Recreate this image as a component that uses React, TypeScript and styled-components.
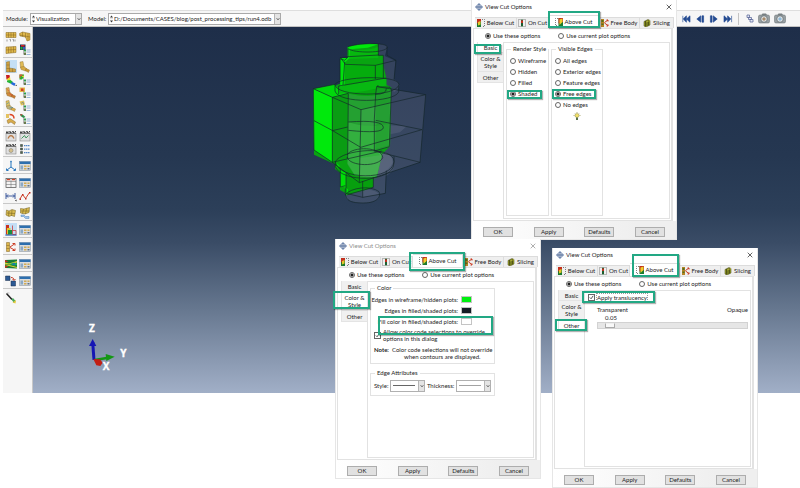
import React from "react";
import styled, { createGlobalStyle, css } from "styled-components";

const GlobalStyle = createGlobalStyle`
  * { box-sizing: border-box; }
  body { margin: 0; background: #fff; }
  body, button, input, select {
    font-family: Lato, "Liberation Sans", sans-serif;
    font-size: 6px;
    line-height: 8px;
    color: #1c1c1c;
  }
`;

const Page = styled.div`
  position: relative;
  min-height: 488px;
  overflow: hidden;
`;

/* ---------- top toolbar ---------- */

const TopBar = styled.header`
  display: flex;
  align-items: center;
  height: 17px;
  margin: 10px 0 0 3px;
  padding: 0 14px 0 3px;
  background: #f6f6f6;
  border-top: 1px solid #dedede;
  border-bottom: 1px solid #c2c2c2;
`;

const BarLabel = styled.label<{ $width: number }>`
  width: ${(p) => p.$width}px;
`;

const Combo = styled.span<{ $width: number }>`
  display: flex;
  align-items: center;
  width: ${(p) => p.$width}px;
  height: 12px;
  margin-right: 6px;
  background: #fff;
  border: 1px solid #a9a9a9;
`;

const ComboSelect = styled.select`
  flex: 1;
  min-width: 0;
  height: 10px;
  padding: 0;
  border: 0;
  appearance: none;
  background: transparent;
`;

const ChevronBox = styled.span`
  display: grid;
  place-items: center;
  width: 6px;
  align-self: stretch;
  background: #e4e4e4;
  border-left: 1px solid #b5b5b5;
`;

const Playback = styled.nav`
  display: flex;
  align-items: center;
  gap: 4px;
  margin-left: auto;
`;

const IconButton = styled.button<{ $active?: boolean }>`
  display: grid;
  place-items: center;
  padding: 0;
  border: 0;
  background: ${(p) => (p.$active ? "#c4dff5" : "transparent")};
`;

const Separator = styled.span`
  width: 1px;
  height: 12px;
  margin: 0 3px 0 1px;
  background: #c4c4c4;
`;

/* ---------- workspace ---------- */

const Workspace = styled.main`
  display: flex;
  height: 366px;
`;

const ToolColumn = styled.aside`
  width: 30px;
  margin-left: 3px;
  padding-top: 1px;
  background: #f6f6f6;
  border-right: 1px solid #c8c8c8;
`;

const ToolGroup = styled.div`
  display: grid;
  grid-template-columns: 12px 12px;
  grid-auto-rows: 13px;
  column-gap: 2px;
  padding: 2px 0 1px 2px;
  border-bottom: 1px solid #c8c8c8;
  &:last-child { border-bottom: 0; }
`;

const Viewport = styled.section`
  position: relative;
  flex: 1;
  background: linear-gradient(
    #1e2e49 0%, #253751 35%, #2c3f59 50%, #3a4c66 59%, #66778f 77%, #a1afc7 100%
  );
`;

const ModelDrawing = styled.svg`
  position: absolute;
  left: 257px;
  top: 3px;
`;

const Triad = styled.svg`
  position: absolute;
  left: 27px;
  top: 283px;
`;

/* ---------- dialogs ---------- */

const Dialog = styled.section<{ $left: number; $top: number }>`
  position: absolute;
  left: ${(p) => p.$left}px;
  top: ${(p) => p.$top}px;
  width: 206px;
  background: #fff;
  border: 1px solid #e6e6e6;
  border-top: 0;
`;

const TitleBar = styled.div<{ $muted?: boolean }>`
  display: flex;
  align-items: center;
  gap: 2px;
  height: 14px;
  padding: 0 4px 0 3px;
  color: ${(p) => (p.$muted ? "#8c8c8c" : "#222")};
`;

const CloseButton = styled.button`
  display: grid;
  place-items: center;
  margin-left: auto;
  padding: 0;
  border: 0;
  background: none;
  color: inherit;
`;

const TabStrip = styled.div`
  display: grid;
  grid-template-columns: 42px 32px 50px 41px 34px;
  align-items: end;
  height: 14px;
  padding-left: 3px;
`;

const Tab = styled.button<{ $active?: boolean }>`
  display: flex;
  align-items: center;
  justify-content: center;
  gap: 2px;
  height: ${(p) => (p.$active ? 13 : 11)}px;
  padding: 0;
  white-space: nowrap;
  background: ${(p) => (p.$active ? "#fff" : "#efefef")};
  border: 1px solid #dcdcdc;
  border-width: 1px 1px 0 0;
`;

const Frame = styled.div`
  margin: 0 3px 0 1px;
  border: 1px solid #e2e2e2;
  border-right-width: 2px;
`;

const ModeRow = styled.div`
  display: flex;
  align-items: center;
  gap: 18px;
  height: 13px;
  padding-left: 11px;
`;

const Choice = styled.label`
  display: flex;
  align-items: center;
  gap: 2px;
  height: 11px;
  white-space: nowrap;
`;

const Radio = styled.input`
  flex: none;
  width: 6px;
  height: 6px;
  margin: 0;
  appearance: none;
  border: 1px solid #666;
  border-radius: 50%;
  background: #fff;
  &:checked { background: radial-gradient(circle, #222 0 1px, #fff 2px); }
`;

const Columns = styled.div`
  display: grid;
  grid-template-columns: 26px 1fr;
  margin: 0 1px 1px 3px;
`;

const SideTab = styled.button<{ $active?: boolean; $tall?: boolean }>`
  display: block;
  width: 100%;
  height: ${(p) => (p.$tall ? 19 : 11)}px;
  padding: 0;
  line-height: 7px;
  background: ${(p) => (p.$active ? "#fff" : "#f0f0f0")};
  border: 1px solid #e4e4e4;
  border-width: 0 0 1px 1px;
`;

const Panel = styled.div`
  display: flex;
  align-items: stretch;
  gap: 2px;
  min-height: 177px;
  padding: 2px;
  border: 1px solid #e2e2e2;
`;

const PanelStack = styled.div`
  display: flex;
  flex-direction: column;
  gap: 5px;
  width: 125px;
`;

const Group = styled.fieldset<{ $width: number }>`
  width: ${(p) => p.$width}px;
  min-width: 0;
  margin: 0;
  padding: 2px 3px 3px;
  border: 1px solid #e2e2e2;
`;

const GroupTitle = styled.legend`
  margin-left: 1px;
  padding: 0 2px;
  white-space: nowrap;
`;

const Hint = styled.div`
  display: grid;
  place-items: center;
  height: 12px;
`;

const SwatchRow = styled.div`
  display: flex;
  align-items: center;
  justify-content: flex-end;
  gap: 3px;
  height: 11px;
  padding-right: 19px;
  white-space: nowrap;
`;

const Swatch = styled.button<{ $color: string }>`
  flex: none;
  width: 11px;
  height: 7px;
  padding: 0;
  background: ${(p) => p.$color};
  border: 1px solid #c4c4c4;
`;

const CheckRow = styled.label<{ $focus?: boolean }>`
  display: flex;
  align-items: center;
  gap: 2px;
  padding-top: 1px;
  line-height: 7px;
  white-space: nowrap;
  ${(p) => p.$focus && css`
    span { outline: 1px dotted #999; }
  `}
`;

const CheckBox = styled.input`
  flex: none;
  width: 7px;
  height: 7px;
  margin: 0;
  appearance: none;
  border: 1px solid #666;
  background: #fff;
  &:checked {
    background: url("data:image/svg+xml,%3Csvg xmlns='http://www.w3.org/2000/svg' viewBox='0 0 6 6'%3E%3Cpath d='M1 3l1.5 1.5L5 1' fill='none' stroke='%23333'/%3E%3C/svg%3E") center / 5px 5px no-repeat;
  }
`;

const Note = styled.div`
  display: grid;
  grid-template-columns: 18px 1fr;
  margin-top: 4px;
  line-height: 7px;
  white-space: nowrap;
`;

const NoteText = styled.div`
  text-align: center;
  justify-self: start;
`;

const AttributeRow = styled.div`
  display: flex;
  align-items: center;
  justify-content: space-between;
  height: 13px;
`;

const LinePicker = styled.span`
  display: grid;
  grid-template-columns: 1fr 6px;
  align-items: center;
  width: 35px;
  height: 12px;
  border: 1px solid #b0b0b0;
`;

const LineSelect = styled.select<{ $weight: number }>`
  width: 22px;
  height: 9px;
  margin-left: 2px;
  padding: 0;
  border: 0;
  appearance: none;
  color: transparent;
  background: linear-gradient(#666, #666) center / 100% 1px no-repeat;
  opacity: ${(p) => (p.$weight > 1 ? 1 : 0.6)};
`;

const Translucency = styled.div`
  flex: 1;
  padding: 0 0 0 1px;
`;

const Scale = styled.div`
  padding: 5px 0 0 9px;
`;

const ScaleLabels = styled.div`
  display: flex;
  justify-content: space-between;
`;

const ScaleValue = styled.output`
  display: block;
  padding-left: 8px;
`;

const Slider = styled.input`
  display: block;
  width: 100%;
  height: 7px;
  margin: 0;
  appearance: none;
  background: #e6e6e6;
  border: 1px solid #d2d2d2;
  &::-webkit-slider-thumb {
    appearance: none;
    width: 10px;
    height: 5px;
    background: #f8f8f8;
    border: 1px solid #aaa;
    border-top-color: #eee;
  }
`;

const Footer = styled.footer`
  display: flex;
  align-items: center;
  justify-content: space-between;
  height: 18px;
  padding: 3px 11px 0;
  background: linear-gradient(90deg, #fff, #efefef 80%);
`;

const PushButton = styled.button`
  width: 30px;
  height: 10px;
  padding: 0;
  line-height: 8px;
  background: #e1e1e1;
  border: 1px solid #adadad;
`;

const Highlight = styled.div<{ $x: number; $y: number; $w: number; $h: number }>`
  position: absolute;
  left: ${(p) => p.$x}px;
  top: ${(p) => p.$y}px;
  width: ${(p) => p.$w}px;
  height: ${(p) => p.$h}px;
  border: 2px solid #22a884;
  box-shadow: 1px 1px 1px rgba(0, 0, 0, 0.3);
  pointer-events: none;
`;

/* ---------- icons ---------- */

const Chevron = () => (
  <svg width="4" height="4" viewBox="0 0 4 4"><path d="M.5 1l1.5 2L3.5 1" fill="none" stroke="#555" strokeWidth=".7" /></svg>
);

const Spinner = () => (
  <svg width="5" height="10" viewBox="0 0 5 10" fill="#333">
    <path d="M2.500 1.500l1.500 2h-3zM2.500 8.500l1.500-2h-3z" /><path d="M1 4.700h3" stroke="#bbb" strokeWidth=".5" />
  </svg>
);

const AppIcon = () => (
  <svg width="8" height="8" viewBox="0 0 16 16" fill="#6f86ad">
    <path d="M8 0l4 4H4zM8 16l4-4H4zM3 4.500L0 8l3 3.500zM13 4.500L16 8l-3 3.500z" /><rect x="3" y="5" width="10" height="6" fill="#46618f" /><path d="M4 8h8" stroke="#dbe4f2" strokeWidth="1.500" />
  </svg>
);

const CloseIcon = () => (
  <svg width="6" height="6" viewBox="0 0 6 6"><path d="M.7.7l4.600 4.600M5.300.7L.7 5.300" stroke="currentColor" strokeWidth=".7" /></svg>
);

type CutKind = "below" | "on" | "above" | "free" | "slice";

const CutIcon = ({ kind }: { kind: CutKind }) => (
  <svg width="8" height="8" viewBox="0 0 16 16">
    {kind === "below" && (<g><rect width="8" height="16" fill="#1c7a2e" /><path d="M0 0h8v5L0 9z" fill="#c3301d" /><path d="M2 6l5-2v7l-5 2z" fill="#e5c62b" /><path d="M10 1h5v14h-5" fill="none" stroke="#555" strokeWidth="1.500" strokeDasharray="2 2" /></g>)}
    {kind === "on" && (<g><path d="M5 1H1v14h4M11 1h4v14h-4" fill="none" stroke="#555" strokeWidth="1.500" strokeDasharray="2 2" /><rect x="6" y="1" width="4" height="14" fill="#1c5d2e" /><path d="M6 3h4v5H6z" fill="#c3301d" /></g>)}
    {kind === "above" && (<g><path d="M6 1H1v14h5" fill="none" stroke="#555" strokeWidth="1.500" strokeDasharray="2 2" /><rect x="7" y="0" width="9" height="16" fill="#1c7a2e" /><path d="M7 0h9v8l-9 3z" fill="#c3301d" /><path d="M9 3l6-2v7l-6 6z" fill="#ecd02b" /></g>)}
    {kind === "free" && (<g><rect width="6" height="16" fill="#b58424" /><path d="M1 2h4v4H1zM1 9h4v3H1z" fill="#56701f" /><path d="M7 7l7-5M7 8l7 5M11 2h3v3M11 14h3v-3" fill="none" stroke="#c9371e" strokeWidth="2" /></g>)}
    {kind === "slice" && (<g stroke="#3c3c12"><path d="M2 5l8-4 4 2v9l-8 4-4-2z" fill="#9aa52b" /><path d="M5 4v11M8 3v11M11 2v11" fill="none" strokeWidth="1.500" /><path d="M6 6l8-3" stroke="#e6df4c" /></g>)}
  </svg>
);

const BulbIcon = () => (
  <svg width="8" height="9" viewBox="0 0 16 18">
    <circle cx="8" cy="7" r="4" fill="#f5e36a" stroke="#8c8840" /><rect x="6" y="11" width="4" height="5" fill="#587049" /><path d="M8 0v2M1 7h2M13 7h2M3 2l1 1M13 2l-1 1" stroke="#8c8840" strokeWidth="1.300" />
  </svg>
);

type ToolKind =
  | "beams" | "beamsTilt" | "plate" | "colorList" | "elbow" | "elbowTilt" | "contour" | "contourList"
  | "symbol" | "symbolList" | "orient" | "orientList" | "animate" | "animateList" | "clap" | "clap2"
  | "clap3" | "dots" | "csys" | "table" | "grid" | "ruler" | "plot" | "sheet" | "sheets" | "viewCut"
  | "freeBody" | "stream" | "overlay" | "brush";

const elbow = (
  <g stroke="#7a5a1c" strokeWidth=".8">
    <path d="M3 2l6-1v13l12 2v6H3z" fill="#cda040" /><path d="M3 8h6M3 15h6M9 14v8M15 15v7" fill="none" />
  </g>
);

const bentElbow = (upper: string, mid: string, end: string) => (
  <g strokeWidth=".8" stroke="#8a6b2e">
    <path d="M2 2l6-1 2 12H3z" fill={upper} /><path d="M3 12l7-1 6 5-3 4-9-3z" fill={mid} /><path d="M14 15l7 3-2 5-7-4z" fill={end} />
  </g>
);

const listLines = (
  <g>
    <path d="M9 7v14M9 13h3M9 20h3" stroke="#777" fill="none" /><rect x="10" y="11" width="4" height="4" fill="#2b9c49" /><rect x="10" y="17" width="4" height="5" fill="#687a4c" />
    <path d="M15 12h8M15 16h8M15 21h8" stroke="#7ba2cd" strokeWidth="1.500" />
  </g>
);

const board = (
  <g><rect x="2" y="7" width="20" height="15" fill="#e0e0e0" stroke="#777" /><path d="M2 3l20-1v5H2z" fill="#444" /><path d="M6 3l3 3M12 2l3 4M18 2l3 4" stroke="#fff" strokeWidth="2" /></g>
);

const tools: Record<ToolKind, React.ReactNode> = {
  beams: (<g><path d="M2 3h20v10H2z" fill="#dfb84b" stroke="#85651e" /><path d="M2 8h20M7 3v10M12 3v10M17 3v10" stroke="#85651e" /><path d="M4 17v4M9 17h2v4M15 17h2v4M20 17v4" stroke="#444" fill="none" /></g>),
  beamsTilt: (<g stroke="#85651e"><path d="M1 5l6-3 15 3v13l-6 2-3-8-11-2z" fill="#dfb84b" /><path d="M1 8l21 4M7 2v9M13 4v9M18 5v14" fill="none" /></g>),
  plate: (<g stroke="#85651e"><path d="M2 6l20-1v12l-20 2z" fill="#dfb84b" /><path d="M2 12l20-1M7 6v12M12 6v12M17 5v12" fill="none" /></g>),
  colorList: (<g><path d="M2 1h11v11H2z" fill="#25324e" /><path d="M4 2h7v3H4z" fill="#d22" /><path d="M3 6h4v5H3z" fill="#1cb243" /><path d="M8 6h4v5H8z" fill="#2855cf" />{listLines}</g>),
  elbow,
  elbowTilt: bentElbow("#e0bb55", "#d7ab45", "#c79530"),
  contour: (<g><path d="M2 2l7 0 1 5-7 4z" fill="#c81e1e" /><path d="M3 11l7-5 1 6-2 4z" fill="#f0db2e" /><path d="M4 13l7-1 5 4-3 4-9-4z" fill="#22b53a" /><path d="M14 16l7 3-2 5-7-4z" fill="#2468dc" /><path d="M22 21l2 3h-3z" fill="#222" /></g>),
  contourList: (<g><path d="M1 1h9v5l-4 5H1z" fill="#26b02f" /><path d="M1 1h6v3H3v4H1z" fill="#d53" /><path d="M5 5l5-2v4z" fill="#e9e02f" />{listLines}</g>),
  symbol: (<g>{bentElbow("#d9a950", "#d08b3d", "#c9772f")}<path d="M5 5l3 4M9 13l6 4" stroke="#d22" /></g>),
  symbolList: (<g><path d="M1 1h11v9H1z" fill="#e5ba49" /><path d="M4 3h5v5H4z" fill="#d33a20" />{listLines}</g>),
  orient: (<g>{bentElbow("#e0c35f", "#bdb37b", "#dcae45")}<path d="M3 8l5-3M9 16l7-1" stroke="#2480b8" /></g>),
  orientList: (<g><path d="M1 3l9-2 2 8-8 2z" fill="#e2c458" /><path d="M4 7l4-3 1 4" stroke="#44719d" fill="none" />{listLines}</g>),
  animate: (<g><path d="M2 2h6v8H2z" fill="#e3c260" /><path d="M9 3c9 0 9 5 9 8" fill="none" stroke="#d42" strokeWidth="3" /><path d="M4 15l6-4 11 7-2 5-7-5-6 3z" fill="#d8ac4b" stroke="#8a6b2e" /></g>),
  animateList: (<g><path d="M2 2l5 1 6 5-4 2-6-4z" fill="#25924a" /><path d="M2 2l5 1-2 3z" fill="#c33" />{listLines}</g>),
  clap: (<g>{board}<path d="M6 17c3-8 9-8 12 0" fill="none" stroke="#b77846" strokeWidth="2.500" /></g>),
  clap2: (<g>{board}<path d="M5 17l6-6 3 5 5-5" fill="none" stroke="#43995f" strokeWidth="2" /></g>),
  clap3: (<g>{board}<circle cx="12" cy="15" r="4" fill="#d5c08c" stroke="#777" /></g>),
  dots: (<g><path d="M3 3h4v4H3zM3 10h4v4H3zM3 17h4v4H3z" fill="#4d6d50" stroke="#333" /><path d="M10 5h12M10 12h12M10 19h12" stroke="#5487c6" strokeWidth="2.500" strokeDasharray="3 1" /></g>),
  csys: (<g stroke="#2776bd" strokeWidth="2" fill="none"><path d="M12 14V4M12 14l-8 6M12 14l8 6" /><circle cx="12" cy="3" r="1" /><path d="M3 17v4h4M21 17v4h-4" /></g>),
  table: (<g><rect x="1" y="3" width="22" height="18" fill="#d9dbdd" stroke="#7b8793" /><path d="M1 3h22v5H1z" fill="#2d6fae" /><path d="M3 11h5v8H3z" fill="#8aa9c5" /><path d="M10 11h5v3h-5zM17 11h4v3h-4zM10 16h5v3h-5z" fill="#d2ab55" /><path d="M17 16h4v3h-4z" fill="#5d6f86" /></g>),
  grid: (<g><rect x="2" y="3" width="20" height="18" fill="#f4f4f4" stroke="#555" strokeWidth="1.500" /><path d="M2 9h20M2 15h20M12 3v18" stroke="#666" /><path d="M4 5h6M14 5h6" stroke="#d0442a" strokeWidth="2.500" /></g>),
  ruler: (<g stroke="#2b4b94" strokeWidth="1.800" fill="none"><path d="M2 6v12M20 6v12M3 12h16M6 9l-3 3 3 3M16 9l3 3-3 3" /><path d="M20 21l3 2v-4z" fill="#222" stroke="none" /></g>),
  plot: (<g><path d="M2 18l5-9 6 8 8-12" fill="none" stroke="#d1432c" strokeWidth="2" /><path d="M1 17h3v3H1zM6 8h3v3H6zM12 16h3v3h-3zM20 4h3v3h-3z" fill="#c02a1d" /></g>),
  sheet: (<g><path d="M3 6l5 2 6-3 7 2-2 12-6-2-5 2-6-3z" fill="#d9ba4e" stroke="#6d5c1e" /><path d="M4 12l16 1M8 8l-1 10M14 6l-1 12" stroke="#6d5c1e" /></g>),
  sheets: (<g><path d="M3 3l7 1 11-3-1 10-8 3-9-2z" fill="#d9ba4e" stroke="#6d5c1e" /><path d="M9 4l-2 9M15 3l-2 11M4 8h17" stroke="#6d5c1e" /><path d="M4 16h6l3 3h7v4h-7l-4-4H4z" fill="#9dc3ed" stroke="#4c80b8" /></g>),
  viewCut: (<g><path d="M2 2h6v19H2z" fill="#c8321f" /><path d="M4 8h7v13H4z" fill="#e3c52c" /><path d="M6 12h8v9H6z" fill="#1c8b3d" /><path d="M15 3v18M15 13h7v8h-7" fill="none" stroke="#c33" strokeWidth="1.500" /><path d="M1 22h22" stroke="#2455a8" strokeWidth="2" /></g>),
  freeBody: (<g><path d="M3 3h6v18H3z" fill="#dcb64d" stroke="#806322" /><path d="M3 9h6M3 15h6" stroke="#806322" /><path d="M10 12l9-6M10 13l9 5M15 5h5v4M15 19h5v-4" fill="none" stroke="#cc3c24" strokeWidth="2" /></g>),
  stream: (<g><path d="M0 4l24-1v18L0 20z" fill="#1a7c35" /><path d="M0 4l7 3-7 2zM0 20l7-3-7-2z" fill="#c9341f" /><path d="M0 9l8 2 16-5v3L9 13H0zM0 14l9 0 15 4v2L8 16z" fill="#d9cf35" /><path d="M9 12l9-3 6 2v3l-6 1z" fill="#19b45c" /><path d="M13 12l6-2 2 2-3 2z" fill="#2167c0" /></g>),
  overlay: (<g><path d="M1 2h9v9H1z" fill="#2c5a94" stroke="#1b2e4b" /><path d="M12 12h9v10h-9z" fill="#2c5a94" stroke="#1b2e4b" /><path d="M12 5c4 0 6 2 6 5M15 8l3 3 3-3" fill="none" stroke="#c53d26" strokeWidth="2" /></g>),
  brush: (<g><path d="M3 3l11 12" stroke="#222" strokeWidth="3" /><path d="M4 2h5" stroke="#888" /><path d="M13 15l3-3 5 6-3 4z" fill="#46a85b" /><path d="M15 21l7-5-1 7z" fill="#e3c83a" /></g>),
};

const Tool = ({ kind, active }: { kind: ToolKind; active?: boolean }) => (
  <IconButton $active={active} aria-label={kind}>
    <svg width="12" height="12" viewBox="0 0 24 24">{tools[kind]}</svg>
  </IconButton>
);

const toolGroups: ToolKind[][] = [
  ["beams", "beamsTilt", "plate", "colorList"],
  ["elbow", "elbowTilt", "contour", "contourList", "symbol", "symbolList", "orient", "orientList", "animate", "animateList"],
  ["clap", "clap2", "clap3", "dots"],
  ["csys", "table"],
  ["grid", "table", "ruler", "plot"],
  ["sheet", "sheets"],
  ["viewCut", "table"],
  ["freeBody", "table"],
  ["stream", "table"],
  ["overlay", "table"],
  ["brush"],
];

const playPaths = [
  "M1 1v8M10 1v8L5.500 5zM5.500 1v8L1.500 5z",
  "M6 1v8L1 5zM7.500 1h2v8h-2z",
  "M4 1v8l5-4zM.5 1h2v8h-2z",
  "M0 1v8l4.500-4zM4.500 1v8l4-4zM9.500 1v8",
];

const CameraIcon = ({ lens }: { lens: string }) => (
  <svg width="12" height="11" viewBox="0 0 24 22">
    <rect x="1" y="4" width="22" height="16" rx="3" fill="#98a0a3" stroke="#626a6d" /><path d="M7 4l2-3h7l2 3z" fill="#777f82" /><circle cx="12" cy="12" r="6.500" fill="#e7eaeb" stroke="#5c6669" strokeWidth="1.500" /><circle cx="12" cy="12" r="3.500" fill={lens} />
  </svg>
);

/* ---------- 3D view drawings ---------- */

const BoltModel = () => (
  <ModelDrawing width="160" height="180" viewBox="0 0 480 540" strokeLinejoin="round">
    <g fill="#8b8fa8" fillOpacity=".2" stroke="none">
      <path d="M260 42c22 0 32 5 32 10l-8 26 32 14-4 56c20 10 22 30 0 38l-12-16-40-14z" />
      <path d="M260 170l147 24-17 203-182 61V240z" />
      <path d="M265 360c65 10 65 70 0 88l-57 10 80-26-3 58-68 12v-40z" />
      <ellipse cx="217" cy="498" rx="51" ry="21" />
      <path d="M298 286l52 3-20 18-30 6z" />
    </g>
    <path d="M174 50c20-8 60-9 91-8v34h15v30l9 38v20l15 8-4 175-25 28-15 68-14 4-1 28-75 20-5-7-15-8v-52l-15-11v-14l-63-29-2-184 65-13c-2-8 2-13 15-16V84h22z" fill="#09a411" />
    <g stroke="none">
      <path d="M174 51q45-13 91-8l-32 10-53 5z" fill="#00e80a" />
      <path d="M70 176l57 26v195l-55-37z" fill="#00e90c" />
      <path d="M70 176l65-13 15 24 25 4-48 11z" fill="#00d80b" />
      <path d="M127 202l48-12-2 196-46 11z" fill="#0a9c13" />
      <path d="M180 58q50 6 85-8v34l-90 3z" fill="#06b80e" />
      <path d="M164 98l92 6 24-8v48l-118 24z" fill="#05ac0d" />
      <path d="M146 170l143-26v22q-60 22-140 25z" fill="#08b812" />
      <path d="M175 191q90 20 128-16l-3 175-46 12 23 10-17 70-52 16-36-55z" fill="#24a031" />
      <path d="M213 240l87-22-4 64-21-8q-20 20-62 16z" fill="#33a541" />
      <path d="M175 276q50 18 104 8l20-2-3 64-42 12 22 14-16 68-52 16-35-55z" fill="#33b03f" />
      <path d="M258 178l42-8-5 178-39 12z" fill="#1c9a2a" fillOpacity=".6" />
      <path d="M151 418q40 25 99 25v28l-78 24-5-26-16 3z" fill="#079f0e" />
      <path d="M151 418l17 8v44l-17 2zM164 470l10 8-2 18-7-7zM136 395l14 14-8 4z" fill="#00df08" />
      <path d="M173 50l7 7-2 28-14 13v68l-13 4V84h22z" fill="#00e30b" />
      <path d="M258 360q50 8 50 38-18 40-98 46v-60l60-8z" fill="#a6b0b5" fillOpacity=".15" />
    </g>
    <g fill="none" stroke="#13252a" strokeWidth="2">
      <path d="M70 176l57 26v195l-55-37zM70 176l65-13M127 202l48-12M127 202l86 37 194-45-146-24 4-5M72 272l56 30 84 50 184-53-139-28M127 302l46-11M127 397l81 61 182-61 17-203M213 239l-5 219M127 397l148-34M175 191l-2 194M391 397l-138-34" />
      <path d="M174 50c25-10 118-15 118 2-6 18-100 18-118 4v25l-10 10-14-5v64M151 82l15 21 90 3 62-15-27-15v-25M256 106v41M318 91l-6 58M265 42v34h15v68M164 95l-5 70M151 84l23-4 92-5" />
      <path d="M135 163c10-23 189-30 192 0-5 40-192 38-192 0v20c10 39 178 35 191 3v-18M146 168l143-24M146 168v25M255 193q35 0 34-18M175 276q106-8 105 17-2 19-105 8M260 170l40 2 4 8-6 170-45 13v-95l4-75z" />
      <path d="M136 395c20-38 176-50 176 0-4 58-168 55-176 0v15c17 48 176 48 176-10v-22M171 375c15-28 107-24 107 8-10 28-99 28-107-2" />
      <path d="M151 418v53l15-4M168 430v60l50 12 68-12 3-68M166 475c-2 32 5 44 55 44 45 0 52-23 46-34-25-20-85-12-101 9M172 494l78-22v-30M218 502v-49" />
    </g>
  </ModelDrawing>
);

const AxisTriad = () => (
  <Triad width="90" height="90" viewBox="0 0 270 270">
    <path d="M102 150L98 96" stroke="#1616b4" strokeWidth="9" /><path d="M98 87l11 21H87z" fill="#1616b4" />
    <path d="M104 150l36-6" stroke="#149714" strokeWidth="7" /><path d="M137 132l27 8-25 13z" fill="#149714" />
    <path d="M100 147l20 1 8 10-7 10-12-2z" fill="#c21f14" />
    <g fill="#fff" stroke="#fff" fontFamily="Open Sans, sans-serif" fontSize="30" fontWeight="700" textAnchor="middle">
      <text x="96" y="67">Z</text><text x="190" y="142">Y</text><text x="138" y="180">X</text>
    </g>
  </Triad>
);

/* ---------- dialog assembly ---------- */

const cutTabs: [CutKind, string][] = [
  ["below", "Below Cut"], ["on", "On Cut"], ["above", "Above Cut"], ["free", "Free Body"], ["slice", "Slicing"],
];

type Side = "basic" | "color" | "other";

interface CutDialogProps {
  id: string;
  left: number;
  top: number;
  side: Side;
  muted?: boolean;
  marks: [number, number, number, number][];
  children: React.ReactNode;
}

const CutDialog = ({ id, left, top, side, muted, marks, children }: CutDialogProps) => (
  <Dialog $left={left} $top={top} role="dialog" aria-label="View Cut Options">
    <TitleBar $muted={muted}>
      <AppIcon /><span>View Cut Options</span>
      <CloseButton aria-label="Close"><CloseIcon /></CloseButton>
    </TitleBar>
    <TabStrip>
      {cutTabs.map(([kind, text]) => (
        <Tab key={kind} $active={kind === "above"}><CutIcon kind={kind} />{text}</Tab>
      ))}
    </TabStrip>
    <Frame>
      <ModeRow>
        <Choice><Radio type="radio" name={`${id}-mode`} defaultChecked />Use these options</Choice>
        <Choice><Radio type="radio" name={`${id}-mode`} />Use current plot options</Choice>
      </ModeRow>
      <Columns>
        <div>
          <SideTab $active={side === "basic"}>Basic</SideTab>
          <SideTab $tall $active={side === "color"}>Color &amp;<br />Style</SideTab>
          <SideTab $active={side === "other"}>Other</SideTab>
        </div>
        {children}
      </Columns>
    </Frame>
    <Footer>
      {["OK", "Apply", "Defaults", "Cancel"].map((text) => <PushButton key={text}>{text}</PushButton>)}
    </Footer>
    {marks.map(([x, y, w, h]) => <Highlight key={`${x}-${y}`} $x={x} $y={y} $w={w} $h={h} />)}
  </Dialog>
);

const RadioGroup = ({ title, width, options, selected, children }: {
  title: string; width: number; options: string[]; selected: string; children?: React.ReactNode;
}) => (
  <Group $width={width}>
    <GroupTitle>{title}</GroupTitle>
    {options.map((text) => (
      <Choice key={text}><Radio type="radio" name={title} defaultChecked={text === selected} />{text}</Choice>
    ))}
    {children}
  </Group>
);

const EdgePicker = ({ label, weight }: { label: string; weight: number }) => (
  <>
    <label htmlFor={`edge-${label}`}>{label}:</label>
    <LinePicker>
      <LineSelect id={`edge-${label}`} $weight={weight}><option aria-label="Solid" /></LineSelect>
      <ChevronBox><Chevron /></ChevronBox>
    </LinePicker>
  </>
);

export default function App() {
  return (
    <Page>
      <GlobalStyle />
      <TopBar>
        <BarLabel $width={24} htmlFor="module">Module:</BarLabel>
        <Combo $width={52}>
          <Spinner />
          <ComboSelect id="module"><option>Visualization</option></ComboSelect>
          <ChevronBox><Chevron /></ChevronBox>
        </Combo>
        <BarLabel $width={20} htmlFor="model">Model:</BarLabel>
        <Combo $width={173}>
          <Spinner />
          <ComboSelect id="model"><option>D:/Documents/CASES/blog/post_processing_tips/run4.odb</option></ComboSelect>
          <ChevronBox><Chevron /></ChevronBox>
        </Combo>
        <Playback>
          {["First", "Previous", "Next", "Last"].map((name, i) => (
            <IconButton key={name} aria-label={name}>
              <svg width="10" height="8" viewBox="0 0 10 10"><path d={playPaths[i]} fill="#234a91" stroke="#234a91" strokeWidth=".8" /></svg>
            </IconButton>
          ))}
          <Separator />
          <IconButton aria-label="Link viewports">
            <svg width="8" height="9" viewBox="0 0 16 18"><path d="M2 2h5v5H2zM5 7h6v4H5zM8 11h6v5H8z" fill="#e4e8f5" stroke="#5a6596" strokeWidth="1.500" /></svg>
          </IconButton>
          <IconButton aria-label="Snapshot"><CameraIcon lens="#a88a6a" /></IconButton>
          <IconButton aria-label="Record"><CameraIcon lens="#8eb9d9" /></IconButton>
        </Playback>
      </TopBar>

      <Workspace>
        <ToolColumn>
          {toolGroups.map((group, g) => (
            <ToolGroup key={g}>
              {group.map((kind, i) => <Tool key={i} kind={kind} active={kind === "elbow" || kind === "viewCut"} />)}
            </ToolGroup>
          ))}
        </ToolColumn>
        <Viewport>
          <BoltModel />
          <AxisTriad />
        </Viewport>
      </Workspace>

      <CutDialog id="basic" left={471} top={0} side="basic"
        marks={[[76, 11, 52, 17], [2, 44, 27, 10], [35, 90, 35, 9], [80, 89, 44, 10]]}>
        <Panel>
          <RadioGroup title="Render Style" width={43} selected="Shaded" options={["Wireframe", "Hidden", "Filled", "Shaded"]} />
          <RadioGroup title="Visible Edges" width={52} selected="Free edges"
            options={["All edges", "Exterior edges", "Feature edges", "Free edges", "No edges"]}>
            <Hint><BulbIcon /></Hint>
          </RadioGroup>
        </Panel>
      </CutDialog>

      <CutDialog id="color" left={335} top={239} side="color" muted
        marks={[[73, 13, 56, 19], [-3, 52, 37, 18], [42, 77, 115, 19]]}>
        <Panel>
          <PanelStack>
            <Group $width={125}>
              <GroupTitle>Color</GroupTitle>
              <SwatchRow>Edges in wireframe/hidden plots:<Swatch $color="#00f010" aria-label="Wireframe edges" /></SwatchRow>
              <SwatchRow>Edges in filled/shaded plots:<Swatch $color="#151c24" aria-label="Filled edges" /></SwatchRow>
              <SwatchRow>Fill color in filled/shaded plots:<Swatch $color="#fff" aria-label="Fill" /></SwatchRow>
              <CheckRow>
                <CheckBox type="checkbox" defaultChecked />
                <span>Allow color code selections to override<br />options in this dialog</span>
              </CheckRow>
              <Note><b>Note:</b><NoteText>Color code selections will not override<br />when contours are displayed.</NoteText></Note>
            </Group>
            <Group $width={125}>
              <GroupTitle>Edge Attributes</GroupTitle>
              <AttributeRow>
                <EdgePicker label="Style" weight={2} />
                <EdgePicker label="Thickness" weight={1} />
              </AttributeRow>
            </Group>
          </PanelStack>
        </Panel>
      </CutDialog>

      <CutDialog id="other" left={552} top={248} side="other"
        marks={[[79, 6, 47, 23], [29, 43, 73, 12], [2, 71, 32, 12]]}>
        <Panel>
          <Translucency>
            <CheckRow $focus><CheckBox type="checkbox" defaultChecked /><span>Apply translucency</span></CheckRow>
            <Scale>
              <ScaleLabels><span>Transparent</span><span>Opaque</span></ScaleLabels>
              <ScaleValue>0.05</ScaleValue>
              <Slider type="range" min={0} max={1} step={0.01} defaultValue={0.05} aria-label="Translucency" />
            </Scale>
          </Translucency>
        </Panel>
      </CutDialog>
    </Page>
  );
}
